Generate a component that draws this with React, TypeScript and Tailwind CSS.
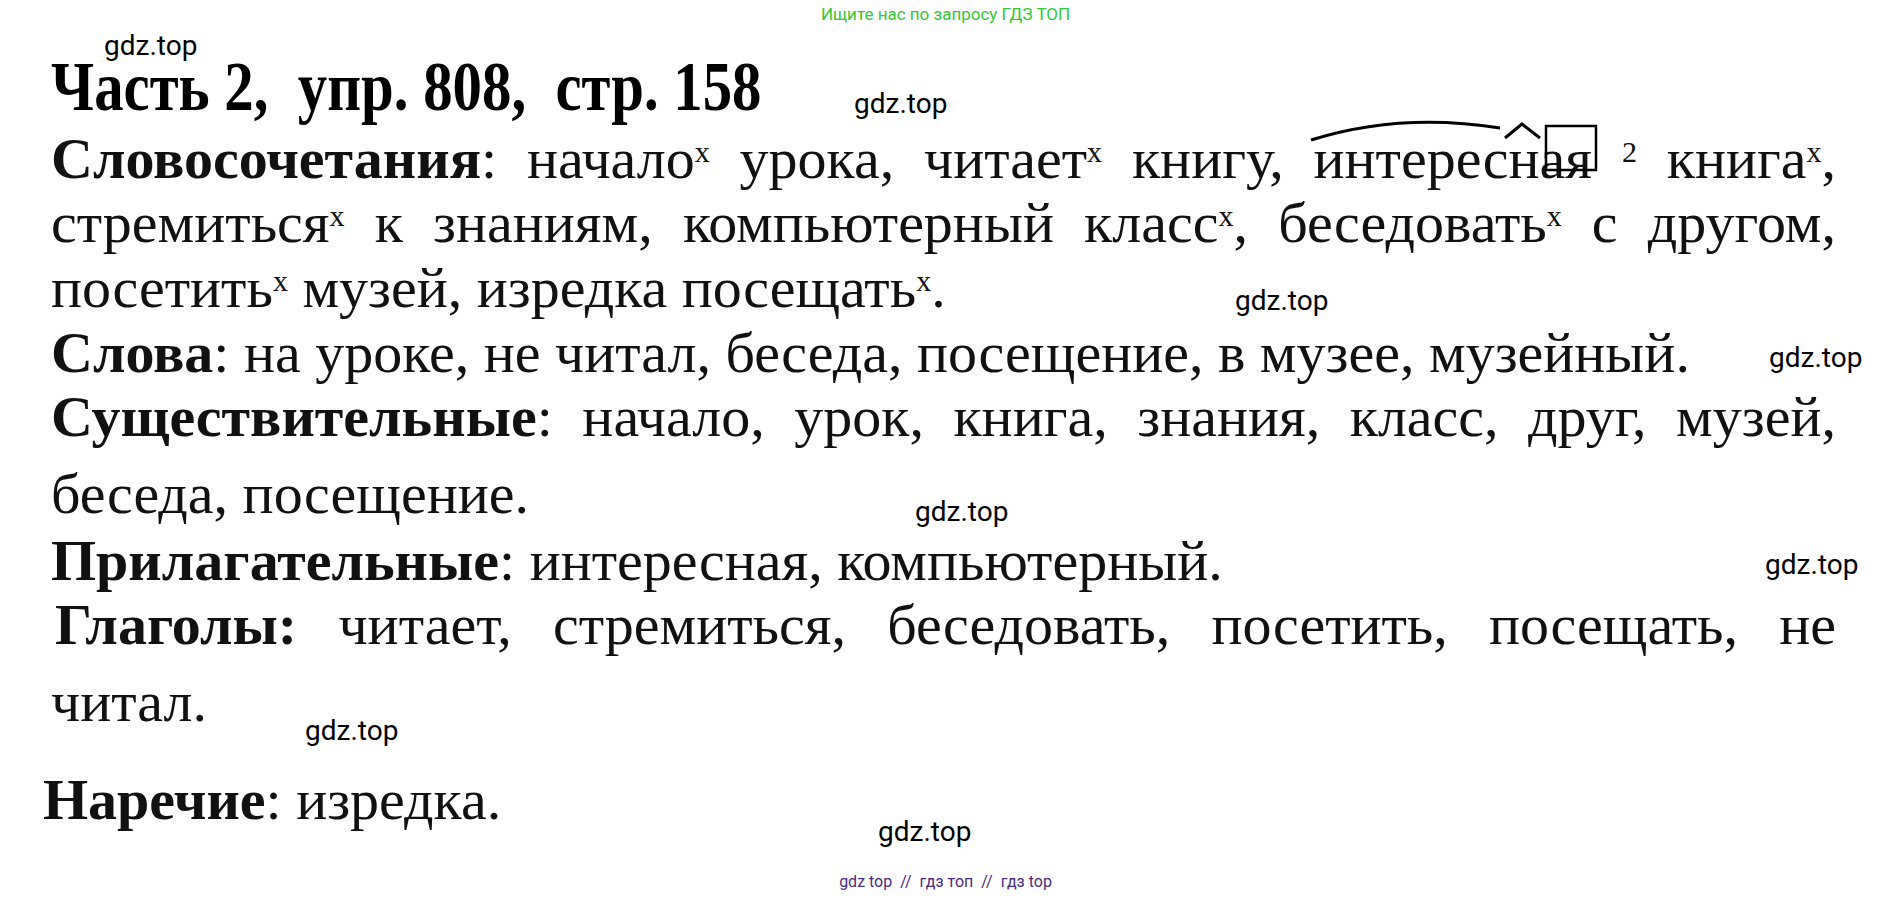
import React from "react";

const X = ({ c = "x" }: { c?: string }) => (
  <sup className="text-[30px] font-normal relative -top-[16px] leading-none" style={{ fontFamily: "'Liberation Serif', serif" }}>{c}</sup>
);

const Wm = ({ x, y }: { x: number; y: number }) => (
  <div className="absolute text-[28px] text-black leading-none" style={{ left: x, top: y, fontFamily: "Roboto, sans-serif" }}>gdz.top</div>
);

const full = "text-justify [text-align-last:justify]";

export default function App() {
  return (
    <div className="relative w-[1891px] h-[899px] bg-white overflow-hidden text-black" style={{ fontFamily: "'Liberation Serif', serif" }}>
      <div className="absolute left-0 right-0 top-[2px] text-center text-[17px] text-[#33c833]" style={{ fontFamily: "Roboto, sans-serif" }}>Ищите нас по запросу ГДЗ ТОП</div>
      <div className="pt-[52px] pl-[51px] w-[1836px]">
        <div className="h-[70px] text-[70px] leading-[70px] font-bold whitespace-pre">
          <span className="inline-block origin-left scale-x-[0.84]">Часть 2,  упр. 808,  стр. 158</span>
        </div>
        <div className="text-[58px] leading-[64px] text-[#111]">
          <div className={`mt-[5px] ${full}`}><b>Словосочетания</b>: начало<X /> урока, читает<X /> книгу, интересная <X c="2" /> книга<X />,</div>
          <div className={full}>стремиться<X /> к знаниям, компьютерный класс<X />, беседовать<X /> с другом,</div>
          <div className="mt-[1px]">посетить<X /> музей, изредка посещать<X />.</div>
          <div className="mt-[1px]"><b>Слова</b>: на уроке, не читал, беседа, посещение, в музее, музейный.</div>
          <div className={full}><b>Существительные</b>: начало, урок, книга, знания, класс, друг, музей,</div>
          <div className="mt-[13px]">беседа, посещение.</div>
          <div className="mt-[3px]"><b>Прилагательные</b>: интересная, компьютерный.</div>
          <div className={`pl-[4px] ${full}`}><b>Глаголы:</b> читает, стремиться, беседовать, посетить, посещать, не</div>
          <div className="mt-[13px]">читал.</div>
          <div className="mt-[34px] -ml-[8px]"><b>Наречие</b>: изредка.</div>
        </div>
      </div>
      <svg className="absolute left-0 top-0" width="1891" height="899" fill="none" stroke="#000" strokeWidth="3">
        <path d="M1311 140 Q1400 112 1500 128" />
        <path d="M1505 138 L1522 124 L1540 138" />
        <rect x="1546" y="126" width="50" height="44" strokeWidth="2.5" />
      </svg>
      <Wm x={104} y={32} />
      <Wm x={854} y={90} />
      <Wm x={1235} y={287} />
      <Wm x={1769} y={344} />
      <Wm x={915} y={498} />
      <Wm x={1765} y={551} />
      <Wm x={305} y={717} />
      <Wm x={878} y={818} />
      <div className="absolute left-0 right-0 top-[872px] text-center text-[16px] leading-[20px] text-[#4a2a80]" style={{ fontFamily: "Roboto, sans-serif" }}>gdz top&nbsp; //&nbsp; гдз топ&nbsp; //&nbsp; гдз top</div>
    </div>
  );
}
